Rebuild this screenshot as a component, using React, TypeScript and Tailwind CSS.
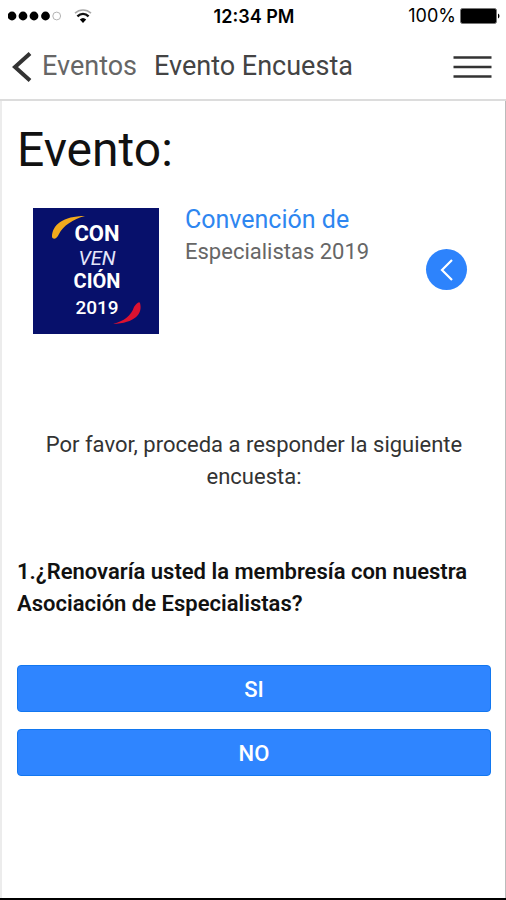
/**
 * @fileoverview Event survey screen: status bar, navigation header,
 * event summary and a single yes / no question.
 */

import React from 'react';

const QUESTION = {
  text: '1.¿Renovaría usted la membresía con nuestra Asociación de Especialistas?',
  answers: ['SI', 'NO'],
};

function StatusBar() {
  return (
    <div className="grid grid-cols-3 items-center h-8 pl-2 pr-1.5 font-['Inter',sans-serif] text-black">
      <div className="flex items-center gap-3">
        <svg width="54" height="10" viewBox="0 0 54 10" aria-hidden="true">
          <circle cx="4" cy="5" r="4.4" />
          <circle cx="15" cy="5" r="4.4" />
          <circle cx="26" cy="5" r="4.4" />
          <circle cx="37.5" cy="5" r="4.4" />
          <circle cx="48.7" cy="5" r="3.9" fill="none" stroke="#b4b4b4" strokeWidth="1" />
        </svg>
        <svg width="18" height="14" viewBox="0 0 18 14" fill="none" aria-hidden="true">
          <path d="M1 4.2C5.6 0 12.4 0 17 4.2" stroke="#a8a8a8" strokeWidth="1.6" />
          <path d="M3.4 7.4C6.8 4.2 11.2 4.2 14.6 7.4" stroke="#111" strokeWidth="2.4" />
          <path d="M5.8 10.6C7.8 8.6 10.2 8.6 12.2 10.6L9 14Z" fill="#000" />
        </svg>
      </div>
      <div className="pt-0.5 text-center text-lg font-semibold">12:34 PM</div>
      <div className="flex items-center justify-end gap-1">
        <span className="text-lg">100%</span>
        <svg width="40" height="16" viewBox="0 0 40 16" aria-hidden="true">
          <rect x="0.5" y="0.5" width="36" height="15" rx="2" fill="#000" stroke="#777" />
          <path d="M38 5.5C40 6.5 40 9.5 38 10.5Z" fill="#000" />
        </svg>
      </div>
    </div>
  );
}

function Header() {
  return (
    <header className="flex items-center h-[69px] pt-0.5 pl-3 pr-3.5 border-b-2 border-[#dcdcdc]">
      <a href="#eventos" className="flex items-center gap-2.5 text-[#666] text-[27px]">
        <svg width="20" height="30" viewBox="0 0 20 30" fill="none" aria-hidden="true">
          <path d="M18 1.5L3 15L18 28.5" stroke="#333" strokeWidth="4" />
        </svg>
        Eventos
      </a>
      <h1 className="ml-[17px] text-[27px] text-[#444]">Evento Encuesta</h1>
      <button type="button" aria-label="Menú" className="ml-auto">
        <svg width="39" height="24" viewBox="0 0 39 24" fill="none" stroke="#333" strokeWidth="2.4" aria-hidden="true">
          <path d="M0.5 2.5H38.5M0.5 12H38.5M0.5 21.5H38.5" />
        </svg>
      </button>
    </header>
  );
}

function ConventionLogo() {
  return (
    <svg
      className="shrink-0"
      width="126"
      height="126"
      viewBox="0 0 126 126"
      role="img"
      aria-label="Convención 2019"
    >
      <rect width="126" height="126" fill="#07106b" />
      <path d="M19 29C19 17 30 8 52 8C40 11 30 18 26 26C24 31 20 32 19 29Z" fill="#f2a91c" />
      <path d="M107 95C110 106 102 115 80 116C91 113 98 108 101 99C103 96 106 93 107 95Z" fill="#dc1230" />
      <g fill="#fff" textAnchor="middle" fontFamily="Roboto, sans-serif">
        <text x="64" y="33" fontSize="22" fontWeight="700">CON</text>
        <text x="64" y="57" fontSize="20" fontStyle="italic" fontWeight="400" fill="#e4e6fb">VEN</text>
        <text x="64" y="80" fontSize="20" fontWeight="700">CIÓN</text>
        <text x="64" y="106" fontSize="19" fontWeight="500">2019</text>
      </g>
    </svg>
  );
}

function EventSummary() {
  return (
    <section className="flex px-4 mt-[30px]">
      <ConventionLogo />
      <div className="ml-[26px] -mt-1">
        <h3 className="text-[25px] leading-8 text-[#2e86f0]">Convención de</h3>
        <p className="text-[22px] leading-8 text-[#666]">Especialistas 2019</p>
      </div>
      <button
        type="button"
        aria-label="Volver"
        className="flex items-center justify-center size-[41px] mt-[41px] mr-2 ml-auto rounded-full bg-[#2d83fc]"
      >
        <svg width="14" height="22" viewBox="0 0 14 22" fill="none" aria-hidden="true">
          <path d="M12 1L2 11L12 21" stroke="#fff" strokeWidth="2.2" />
        </svg>
      </button>
    </section>
  );
}

export default function App() {
  const [answer, setAnswer] = React.useState<string | null>(null);

  return (
    <div className="flex flex-col min-h-screen bg-white border-b-2 border-black font-['Roboto',sans-serif]">
      <StatusBar />
      <Header />

      <main className="grow pl-[15px] pr-3.5 pt-[21px] pb-8 border-l-2 border-l-[#ececec] border-r border-r-[#bbb]">
        <h2 className="text-5xl leading-[56px] text-[#111]">Evento:</h2>

        <EventSummary />

        <p className="mt-[95px] px-4 text-center text-[22px] leading-8 text-[#333]">
          Por favor, proceda a responder la siguiente encuesta:
        </p>

        <p id="question" className="mt-[63px] text-[22px] leading-8 font-semibold text-[#111]">
          {QUESTION.text}
        </p>

        <div role="group" aria-labelledby="question" className="flex flex-col gap-[17px] mt-[45px]">
          {QUESTION.answers.map((label) => (
            <button
              key={label}
              type="button"
              aria-pressed={answer === label}
              onClick={() => setAnswer(label)}
              className="h-[47px] pt-0.5 rounded border border-[#1277f0] bg-[#2f85ff] text-[22px] font-medium text-white"
            >
              {label}
            </button>
          ))}
        </div>
      </main>
    </div>
  );
}
